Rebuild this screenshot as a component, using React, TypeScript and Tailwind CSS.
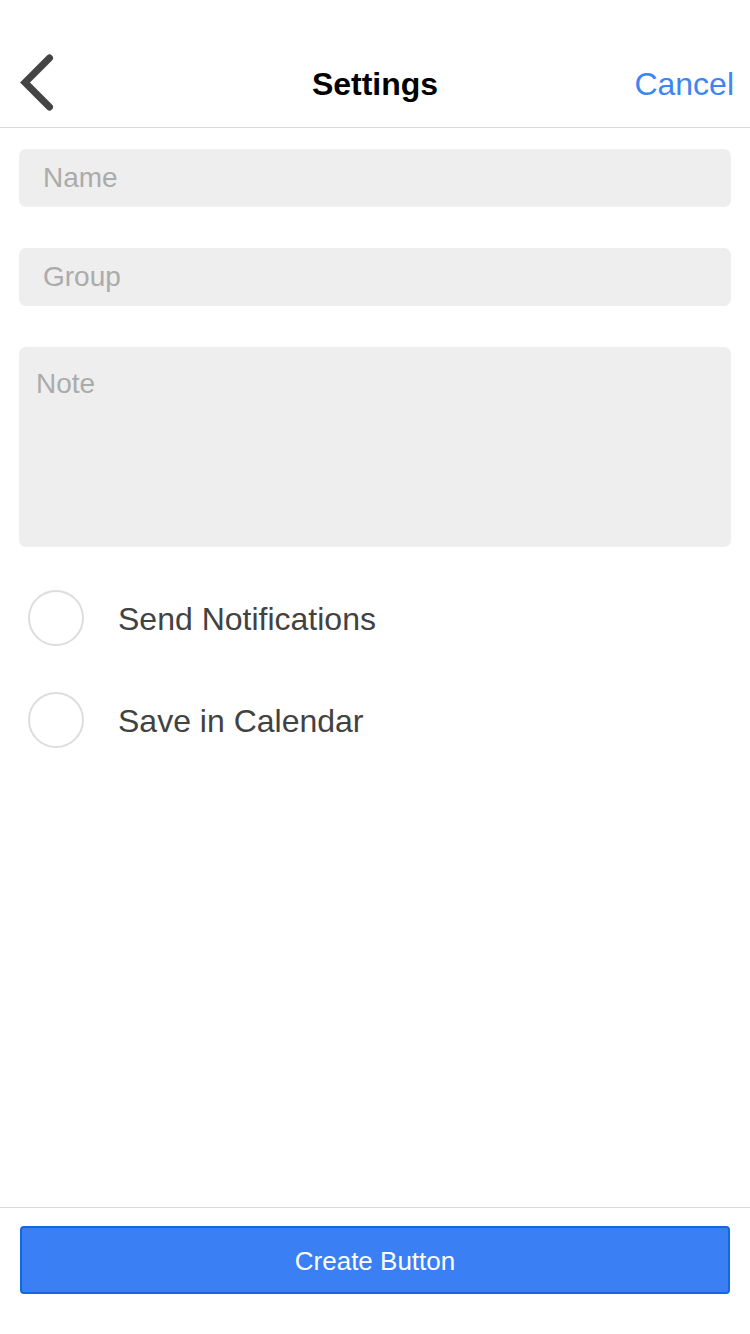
import React from 'react';

const fontStack = { fontFamily: '"Liberation Sans", Arial, Helvetica, sans-serif' };

const Radio: React.FC<{ label: string }> = ({ label }) => (
  <div className="flex items-center h-[56px]">
    <div className="ml-[28px] w-[56px] h-[56px] rounded-full border-2 border-[#dddddd] bg-white" />
    <span className="ml-[34px] text-[32px] leading-[40px] pt-[2px] text-[#424242]">{label}</span>
  </div>
);

const App: React.FC = () => {
  return (
    <div className="min-h-[1334px] w-[750px] bg-white flex flex-col" style={fontStack}>
      {/* header */}
      <div className="h-[128px] pt-[40px] border-b border-[#d9d9d9] grid grid-cols-[1fr_auto_1fr] items-center">
        <div className="flex items-center">
          <button className="ml-[20px] mt-[-2px] w-[34px] h-[58px] flex">
            <svg width="34" height="58" viewBox="0 0 34 58">
              <polyline points="29.5,4 5,28.5 29.5,53" fill="none" stroke="#444444" strokeWidth="7" strokeLinejoin="miter" strokeLinecap="round" />
            </svg>
          </button>
        </div>
        <h1 className="text-[32px] font-bold text-black">Settings</h1>
        <div className="flex justify-end">
          <button className="mr-[16px] text-[32px] text-[#3d86f2]">Cancel</button>
        </div>
      </div>

      {/* form */}
      <div className="flex-1 px-[19px] pt-[21px]">
        <div className="h-[58px] rounded-[7px] bg-[#eeeeee] flex items-center pl-[24px] text-[28px] text-[#ababab]">
          Name
        </div>
        <div className="mt-[41px] h-[58px] rounded-[7px] bg-[#eeeeee] flex items-center pl-[24px] text-[28px] text-[#ababab]">
          Group
        </div>
        <div className="mt-[41px] h-[200px] rounded-[7px] bg-[#eeeeee] pl-[17px] pt-[19px] text-[28px] text-[#ababab] leading-[36px]">
          Note
        </div>
        <div className="mt-[43px] flex flex-col gap-[46px] -mx-[19px]">
          <Radio label="Send Notifications" />
          <Radio label="Save in Calendar" />
        </div>
      </div>

      {/* footer */}
      <div className="h-[127px] border-t border-[#d9d9d9] pt-[18px] px-[20px]">
        <button className="w-full h-[68px] rounded-[4px] border-2 border-[#1466e6] bg-[#3a80f4] text-white text-[26px] pt-[2px]">
          Create Button
        </button>
      </div>
    </div>
  );
};

export default App;
